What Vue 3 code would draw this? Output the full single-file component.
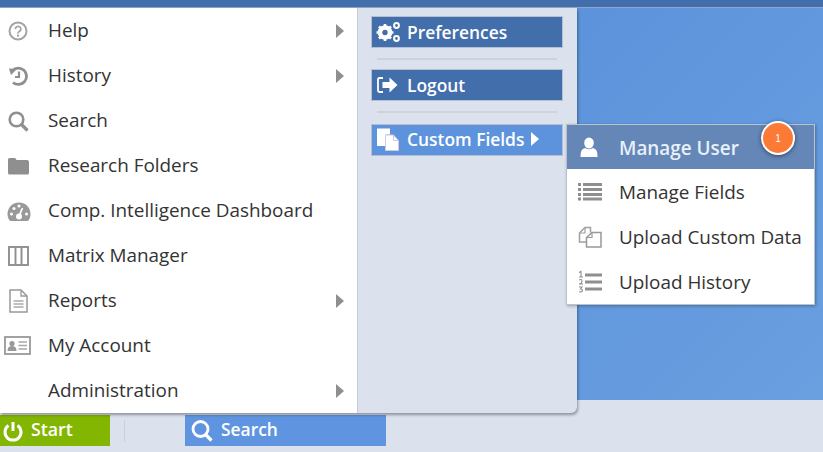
<script setup>
const menuItems = [
  { label: 'Help', icon: 'help', arrow: true },
  { label: 'History', icon: 'history', arrow: true },
  { label: 'Search', icon: 'search' },
  { label: 'Research Folders', icon: 'folder' },
  { label: 'Comp. Intelligence Dashboard', icon: 'gauge' },
  { label: 'Matrix Manager', icon: 'matrix' },
  { label: 'Reports', icon: 'report', arrow: true },
  { label: 'My Account', icon: 'account' },
  { label: 'Administration', icon: '', arrow: true },
]

const subItems = [
  { label: 'Manage User', icon: 'user', active: true },
  { label: 'Manage Fields', icon: 'list' },
  { label: 'Upload Custom Data', icon: 'copy' },
  { label: 'Upload History', icon: 'numbered' },
]
</script>

<template>
  <div class="page">
    <div class="topbar"></div>
    <div class="middle">
      <div class="menu">
        <ul class="left">
          <li v-for="item in menuItems" :key="item.label" class="left-item">
            <span class="left-icon">
              <svg v-if="item.icon === 'help'" width="22" height="22" viewBox="0 0 22 22">
                <circle cx="11" cy="11" r="8.5" fill="none" stroke="#a3a3a3" stroke-width="2" />
                <path d="M8.300 9a2.800 2.600 0 1 1 4.300 2.200c-1 .7-1.600 1-1.600 2.300" fill="none" stroke="#a3a3a3" stroke-width="1.700" />
                <rect x="10" y="14.600" width="2" height="2" fill="#a3a3a3" />
              </svg>
              <svg v-else-if="item.icon === 'history'" width="22" height="22" viewBox="0 0 22 22">
                <path d="M5.500 5.500A8.200 8.200 0 1 1 6 17.500" fill="none" stroke="#8f8f8f" stroke-width="2.800" />
                <path d="M2 3.500l8 .5-6 6z" fill="#8f8f8f" />
                <path d="M12 6.500v5.500H8" fill="none" stroke="#8f8f8f" stroke-width="2.200" />
              </svg>
              <svg v-else-if="item.icon === 'search'" width="22" height="22" viewBox="0 0 22 22">
                <circle cx="9.500" cy="9.500" r="6.800" fill="none" stroke="#8f8f8f" stroke-width="2.600" />
                <path d="M14.500 14.500l6 6" stroke="#8f8f8f" stroke-width="3.200" />
              </svg>
              <svg v-else-if="item.icon === 'folder'" width="22" height="22" viewBox="0 0 22 22">
                <path d="M1 4.500Q1 3 2.500 3h5q1 0 1.500 1l.5 1H20q2 0 2 2v11q0 1.500-1.500 1.500h-18Q1 19.500 1 18z" fill="#8f8f8f" />
              </svg>
              <svg v-else-if="item.icon === 'gauge'" width="24" height="22" viewBox="0 0 24 22">
                <path d="M12 2.500C5 2.500.5 8 .5 14c0 3 1 5 2.500 7h18c1.500-2 2.500-4 2.500-7C23.500 8 19 2.500 12 2.500z" fill="#999" />
                <circle cx="12" cy="16.500" r="3" fill="#fff" />
                <path d="M12 16l3.500-8" stroke="#fff" stroke-width="1.800" />
                <circle cx="4.500" cy="14" r="1.500" fill="#fff" />
                <circle cx="7" cy="8.500" r="1.500" fill="#fff" />
                <circle cx="12" cy="6" r="1.500" fill="#fff" />
                <circle cx="19.500" cy="14" r="1.500" fill="#fff" />
              </svg>
              <svg v-else-if="item.icon === 'matrix'" width="22" height="22" viewBox="0 0 22 22">
                <rect x="2" y="2" width="19" height="18" fill="none" stroke="#8f8f8f" stroke-width="1.900" />
                <path d="M8.500 2v18M14.500 2v18" stroke="#8f8f8f" stroke-width="1.900" />
              </svg>
              <svg v-else-if="item.icon === 'report'" width="22" height="24" viewBox="0 0 22 24">
                <path d="M3 1h11l6 6v16H3z" fill="none" stroke="#999" stroke-width="1.500" />
                <path d="M14 1v6h6" fill="none" stroke="#999" stroke-width="1.300" />
                <path d="M6.500 12h10M6.500 15h10M6.500 18h10" stroke="#aaa" stroke-width="1.300" />
              </svg>
              <svg v-else-if="item.icon === 'account'" class="icon-wide" width="28" height="22" viewBox="0 0 28 22">
                <rect x="1" y="2" width="25" height="17" fill="none" stroke="#999" stroke-width="1.800" />
                <circle cx="8" cy="8.500" r="2.600" fill="#999" />
                <path d="M3.500 16q0-5 4.500-5t4.500 5z" fill="#999" />
                <path d="M14.500 7h8.500M14.500 10.500h8.500M14.500 14h8.500" stroke="#a8a8a8" stroke-width="1.400" />
              </svg>
            </span>
            <span class="left-label">{{ item.label }}</span>
            <span v-if="item.arrow" class="arrow"></span>
          </li>
        </ul>

        <div class="right">
          <div class="btn">
            <svg class="btn-icon gear" width="25" height="22" viewBox="0 0 25 22">
              <circle cx="9" cy="11.500" r="5" fill="none" stroke="#fff" stroke-width="4.600" />
              <path d="M9 3v3M9 17v3M.5 11.500h3M14.500 11.500h3M3 5.500l2 2M13 15.500l2 2M15 5.500l-2 2M5 15.500l-2 2" stroke="#fff" stroke-width="2.600" />
              <circle cx="20.500" cy="4.500" r="2.400" fill="none" stroke="#fff" stroke-width="2" />
              <circle cx="20.500" cy="17.500" r="2.400" fill="none" stroke="#fff" stroke-width="2" />
            </svg>
            Preferences
          </div>
          <div class="sep"></div>
          <div class="btn">
            <svg class="btn-icon" width="24" height="22" viewBox="0 0 24 22">
              <path d="M7 4H3.500Q2 4 2 5.500v11Q2 18 3.500 18H7" fill="none" stroke="#fff" stroke-width="1.800" />
              <path d="M6.500 8h7V3.500l8 7.500-8 7.500V14h-7z" fill="#fff" />
            </svg>
            Logout
          </div>
          <div class="sep sep-last"></div>
          <div class="btn btn-active">
            <svg class="btn-icon" width="24" height="24" viewBox="0 0 24 24">
              <path d="M1 1.500h13v6H10V19H1z" fill="#fff" />
              <path d="M9.500 8h8l5 5.500v10h-13z" fill="#fff" stroke="#cfc8ea" stroke-width="1" />
              <path d="M17.500 8v5.500h5" fill="none" stroke="#cfc8ea" stroke-width="1" />
            </svg>
            Custom Fields
            <span class="arrow arrow-white"></span>

            <ul class="submenu">
              <li v-for="item in subItems" :key="item.label" class="sub-item" :class="{ 'sub-active': item.active }">
                <span class="sub-icon">
                  <svg v-if="item.icon === 'user'" width="24" height="22" viewBox="0 0 24 22">
                    <ellipse cx="11" cy="6" rx="4.800" ry="5.500" fill="#fff" />
                    <path d="M2.500 20q-.5-8 4.500-9 4 2.500 8 0 5 1 4.500 9z" fill="#fff" />
                  </svg>
                  <svg v-else-if="item.icon === 'list'" width="24" height="22" viewBox="0 0 24 22">
                    <path d="M0 3.500h3M5 3.500h19M0 8.500h3M5 8.500h19M0 13.500h3M5 13.500h19M0 18h3M5 18h19" stroke="#8f8f8f" stroke-width="3" />
                  </svg>
                  <svg v-else-if="item.icon === 'copy'" width="24" height="24" viewBox="0 0 24 24">
                    <path d="M8 17H1.500V8L7 2.500h5.500v5" fill="none" stroke="#a0a0a0" stroke-width="1.500" />
                    <path d="M1.500 8H7V2.500" fill="none" stroke="#a0a0a0" stroke-width="1.200" />
                    <path d="M8.500 22V12.500L14 7.500h9V22z" fill="#fff" stroke="#999" stroke-width="1.500" />
                    <path d="M8.500 12.500H14V7.500" fill="none" stroke="#999" stroke-width="1.200" />
                  </svg>
                  <svg v-else width="24" height="24" viewBox="0 0 24 24">
                    <path d="M1 2.500l2-1v5M1 7h4M1 10q3-1.500 3 1t-3 3h4M1 17h3l-1.500 2q2 0 2 1.500T1 22" fill="none" stroke="#8f8f8f" stroke-width="1.100" />
                    <path d="M7 5h17M7 12h17M7 19h17" stroke="#8f8f8f" stroke-width="3" />
                  </svg>
                </span>
                {{ item.label }}
                <span v-if="item.active" class="badge">1</span>
              </li>
            </ul>
          </div>
        </div>
      </div>
      <div class="desktop"></div>
    </div>

    <div class="taskbar">
      <div class="start">
        <svg width="20" height="22" viewBox="0 0 20 22">
          <path d="M5.500 5.500a8 8 0 1 0 9 0" fill="none" stroke="#fff" stroke-width="3" />
          <path d="M10 2v9" stroke="#fff" stroke-width="3" />
        </svg>
        <span class="start-label">Start</span>
      </div>
      <div class="divider"></div>
      <div class="task-search">
        <svg width="24" height="24" viewBox="0 0 24 24">
          <circle cx="10.500" cy="10" r="7.500" fill="none" stroke="#fff" stroke-width="2.800" />
          <path d="M15.500 15.500l6 6" stroke="#fff" stroke-width="3.200" />
        </svg>
        <span>Search</span>
      </div>
    </div>
  </div>
</template>

<style scoped>
.page {
  width: 823px;
  height: 452px;
  overflow: hidden;
  display: flex;
  flex-direction: column;
  background: #dbe2ee;
  font-family: "Open Sans", sans-serif;
  font-size: 18.9px;
  color: #333;
}
.topbar {
  height: 7px;
  flex: none;
  background: #426eab;
  border-bottom: 1px solid #8ea6c9;
}
.middle {
  display: flex;
  align-items: flex-start;
  height: 392px;
  flex: none;
}
.menu {
  flex: none;
  width: 577px;
  height: 405px;
  display: flex;
  background: #dbe2ee;
  border-radius: 0 0 6px 0;
  box-shadow: 1px 2px 3px rgba(0, 0, 0, 0.35);
  position: relative;
  z-index: 2;
}
.desktop {
  flex: 1;
  height: 392px;
  background: linear-gradient(135deg, #5c93db, #6a9fe0);
}
.left {
  list-style: none;
  margin: 0;
  padding: 0;
  width: 358px;
  flex: none;
  display: grid;
  grid-template-rows: repeat(9, 1fr);
  background: #fff;
  border-right: 1px solid #c9ced6;
  box-sizing: border-box;
}
.left-item {
  display: flex;
  align-items: center;
  padding-left: 7px;
  padding-right: 13px;
}
.left-icon {
  width: 41px;
  flex: none;
  display: flex;
}
.icon-wide {
  margin-left: -3px;
}
.left-label {
  flex: 1;
  white-space: nowrap;
  margin-bottom: 1px;
}
.arrow {
  width: 0;
  height: 0;
  border-style: solid;
  border-width: 7px 0 7px 8px;
  border-color: transparent transparent transparent #8f8f8f;
}
.right {
  flex: 1;
  padding: 8px 14px 0 13px;
  display: flex;
  flex-direction: column;
  align-items: flex-start;
}
.btn {
  width: 192px;
  height: 32px;
  box-sizing: border-box;
  background: #426eab;
  border: 1px solid #b5bfcf;
  color: #fff;
  font-size: 17.4px;
  font-weight: 600;
  display: flex;
  align-items: center;
  white-space: nowrap;
  padding-left: 4px;
  position: relative;
}
.btn-icon {
  margin-right: 7px;
  flex: none;
}
.gear {
  margin-right: 6px;
}
.btn-active {
  background: #5d93dd;
  padding-bottom: 2px;
}
.btn-active .arrow {
  margin-left: 7px;
}
.arrow-white {
  border-color: transparent transparent transparent #fff;
}
.sep {
  width: 180px;
  height: 2px;
  background: #cfd3d9;
  margin: 10px 0 9px 6px;
}
.sep-last {
  margin-bottom: 11px;
}
.submenu {
  position: absolute;
  left: 194px;
  top: -1px;
  width: 249px;
  margin: 0;
  padding: 0;
  list-style: none;
  box-sizing: border-box;
  background: #fff;
  border: 1px solid #bcc2ca;
  box-shadow: 1px 1px 3px rgba(0, 0, 0, 0.3);
  color: #333;
  font-size: 18.9px;
  font-weight: 400;
}
.sub-item {
  height: 45px;
  box-sizing: border-box;
  display: flex;
  align-items: center;
  position: relative;
  padding-left: 11px;
}
.sub-active {
  height: 44px;
  padding-top: 2px;
  background: #6487b8;
  color: #e8f0fa;
  font-weight: 600;
}
.sub-icon {
  width: 41px;
  flex: none;
  display: flex;
}
.badge {
  position: absolute;
  left: 194px;
  top: -4px;
  width: 30px;
  height: 30px;
  border-radius: 50%;
  background: #fb7a36;
  border: 2px solid #fff;
  box-shadow: 0 1px 4px rgba(0, 0, 0, 0.5);
  color: #fff;
  font-family: "Liberation Sans", sans-serif;
  font-size: 10px;
  font-weight: 400;
  display: flex;
  align-items: center;
  justify-content: center;
}
.taskbar {
  flex: 1;
  display: flex;
  align-items: flex-start;
  padding-top: 15px;
  color: #fff;
  font-weight: 600;
  font-size: 17.4px;
}
.start {
  width: 110px;
  height: 31px;
  box-sizing: border-box;
  background: #82b600;
  display: flex;
  align-items: center;
  gap: 8px;
  padding-left: 3px;
}
.start-label,
.task-search span {
  margin-bottom: 3px;
}
.start-label {
  font-size: 17.8px;
}
.divider {
  width: 1px;
  height: 22px;
  margin: 5px 0 0 14px;
  background: #cbd0d8;
}
.task-search {
  margin-left: 60px;
  width: 201px;
  height: 31px;
  box-sizing: border-box;
  background: #5f95e0;
  display: flex;
  align-items: center;
  gap: 7px;
  padding-left: 5px;
}
</style>
